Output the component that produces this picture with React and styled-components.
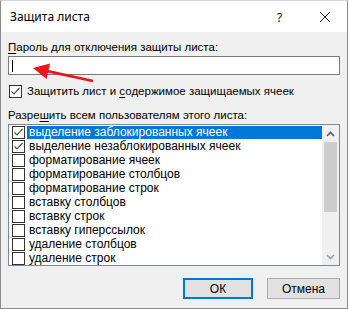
import React from "react";
import styled, { createGlobalStyle } from "styled-components";

const GlobalStyle = createGlobalStyle`
  body {
    margin: 0;
    background: #ffffff;
    font-family: "Liberation Sans", Arial, sans-serif;
  }
`;

const items = [
  { label: "выделение заблокированных ячеек", checked: true, selected: true },
  { label: "выделение незаблокированных ячеек", checked: true },
  { label: "форматирование ячеек" },
  { label: "форматирование столбцов" },
  { label: "форматирование строк" },
  { label: "вставку столбцов" },
  { label: "вставку строк" },
  { label: "вставку гиперссылок" },
  { label: "удаление столбцов" },
  { label: "удаление строк" },
];

const Check = () => (
  <svg width="11" height="11" viewBox="0 0 11 11">
    <path d="M1.5 5.5 L4 8 L9.5 2" fill="none" stroke="#555" strokeWidth="1.2" />
  </svg>
);

const App = () => {
  return (
    <>
      <GlobalStyle />
      <Dialog>
        <TitleBar>
          <Title>Защита листа</Title>
          <TitleButton>?</TitleButton>
          <TitleButton>
            <svg width="12" height="12" viewBox="0 0 12 12">
              <path d="M1 1 L11 11 M11 1 L1 11" stroke="#222" strokeWidth="1" />
            </svg>
          </TitleButton>
        </TitleBar>
        <Body>
          <Label>
            <u>П</u>ароль для отключения защиты листа:
          </Label>
          <PasswordField>
            <Caret />
          </PasswordField>
          <Arrow width="62" height="22" viewBox="0 0 62 22">
            <line x1="12" y1="9.6" x2="60" y2="20" stroke="#f0141e" strokeWidth="2.8" />
            <polygon points="0,7 17,2.6 13.6,18" fill="#f0141e" />
          </Arrow>
          <CheckRow>
            <Box>
              <Check />
            </Box>
            <span>
              Защитить лист и <u>с</u>одержимое защищаемых ячеек
            </span>
          </CheckRow>
          <Label $top={9}>
            Разре<u>ш</u>ить всем пользователям этого листа:
          </Label>
          <List>
            <Items>
              {items.map((it) => (
                <Item key={it.label}>
                  <Box>{it.checked && <Check />}</Box>
                  <ItemText $selected={it.selected}>{it.label}</ItemText>
                </Item>
              ))}
            </Items>
            <ScrollBar>
              <ScrollArrow>
                <svg width="9" height="6" viewBox="0 0 9 6">
                  <path d="M1 5 L4.5 1.5 L8 5" fill="none" stroke="#606060" strokeWidth="1.6" />
                </svg>
              </ScrollArrow>
              <Track>
                <Thumb />
              </Track>
              <ScrollArrow>
                <svg width="9" height="6" viewBox="0 0 9 6">
                  <path d="M1 1 L4.5 4.5 L8 1" fill="none" stroke="#a0a0a0" strokeWidth="1.6" />
                </svg>
              </ScrollArrow>
            </ScrollBar>
          </List>
          <Buttons>
            <Button $primary>ОК</Button>
            <Button>Отмена</Button>
          </Buttons>
        </Body>
      </Dialog>
    </>
  );
};

export default App;

const Dialog = styled.div`
  position: relative;
  width: 348px;
  height: 309px;
  box-sizing: border-box;
  background: #f0f0f0;
  border: 1px solid #8b8b8b;
  border-top-color: #d8d8d8;
  display: flex;
  flex-direction: column;
  font-size: 11.5px;
  color: #000;
`;

const TitleBar = styled.div`
  height: 31px;
  background: #ffffff;
  display: flex;
  align-items: center;
  padding-left: 9px;
`;

const Title = styled.div`
  flex: 1;
  font-family: "Noto Sans", sans-serif;
  font-size: 12px;
`;

const TitleButton = styled.div`
  width: 45px;
  height: 31px;
  display: flex;
  align-items: center;
  justify-content: center;
  font-family: "Noto Sans", sans-serif;
  font-size: 13px;
  color: #222;
`;

const Body = styled.div`
  position: relative;
  display: flex;
  flex-direction: column;
  padding: 7px 7px 0 7px;
`;

const Label = styled.div`
  line-height: 16px;
  margin-top: ${(p) => p.$top || 0}px;
  u {
    text-underline-offset: 2px;
  }
`;

const PasswordField = styled.div`
  margin-top: 1px;
  height: 17px;
  border: 1px solid #7a7a7a;
  background: #fff;
  display: flex;
  align-items: center;
  padding-left: 3px;
`;

const Caret = styled.div`
  width: 1px;
  height: 12px;
  background: #000;
`;

const Arrow = styled.svg`
  position: absolute;
  left: 32px;
  top: 29px;
`;

const CheckRow = styled.div`
  margin-top: 9px;
  display: flex;
  align-items: center;
  gap: 5px;
  padding-left: 1px;
  line-height: 14px;
  u {
    text-underline-offset: 2px;
  }
`;

const Box = styled.div`
  width: 11px;
  height: 11px;
  border: 1px solid #333;
  background: #fff;
  flex-shrink: 0;
  display: flex;
  align-items: center;
  justify-content: center;
`;

const List = styled.div`
  margin-top: 1px;
  height: 142px;
  box-sizing: border-box;
  border: 1px solid #828790;
  background: #fff;
  display: flex;
`;

const Items = styled.div`
  flex: 1;
  padding: 1px 0 0 3px;
  display: flex;
  flex-direction: column;
`;

const Item = styled.div`
  height: 14.1px;
  display: flex;
  align-items: center;
  gap: 2px;
`;

const ItemText = styled.div`
  flex: 1;
  height: 13px;
  line-height: 13px;
  padding-left: 2px;
  font-size: 12px;
  white-space: nowrap;
  background: ${(p) => (p.$selected ? "#0078d7" : "transparent")};
  color: ${(p) => (p.$selected ? "#fff" : "#000")};
`;

const ScrollBar = styled.div`
  width: 17px;
  background: #f0f0f0;
  display: flex;
  flex-direction: column;
`;

const ScrollArrow = styled.div`
  height: 17px;
  display: flex;
  align-items: center;
  justify-content: center;
`;

const Track = styled.div`
  flex: 1;
  padding: 0 2px;
`;

const Thumb = styled.div`
  height: 70px;
  background: #cdcdcd;
`;

const Buttons = styled.div`
  display: flex;
  justify-content: flex-end;
  gap: 14px;
  margin-top: 12px;
`;

const Button = styled.div`
  width: ${(p) => (p.$primary ? 70 : 73)}px;
  height: 21px;
  box-sizing: border-box;
  display: flex;
  align-items: center;
  justify-content: center;
  background: #e1e1e1;
  border: ${(p) => (p.$primary ? "2px solid #0078d7" : "1px solid #adadad")};
  font-size: 12px;
`;
